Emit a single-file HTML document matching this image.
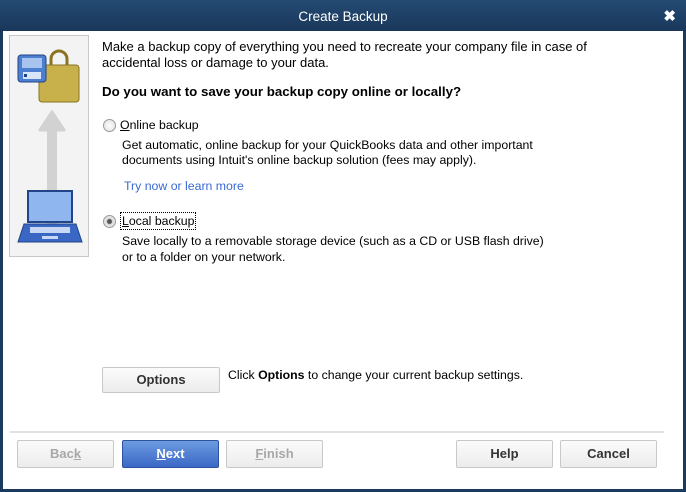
<!DOCTYPE html>
<html><head><style>
*{margin:0;padding:0;box-sizing:border-box}
body{width:686px;height:492px;background:#1c3a5e;font-family:"Liberation Sans",sans-serif;font-size:12.3px;color:#000;position:relative;overflow:hidden}
.title{position:absolute;left:0;top:0;width:686px;height:31px;background:linear-gradient(#244a73,#1a375a);color:#fff;font-size:13.5px;text-align:center;line-height:34px}
.x{position:absolute;right:10px;top:0;font-size:15px;font-weight:bold;line-height:34px}
.main{position:absolute;left:3px;top:31px;width:680px;height:458px;background:#fff}
.left{position:absolute;left:6px;top:4px;width:80px;height:222px;background:#f3f3f3;border:1px solid #c8c8c8}
.t{position:absolute;white-space:nowrap;line-height:16px}
.radio{position:absolute;width:13px;height:13px;border-radius:50%;border:1px solid #999;background:radial-gradient(#fff,#ddd)}
.btn{position:absolute;top:409px;height:28px;border:1px solid #c8c8c8;border-radius:2px;background:linear-gradient(#fbfbfb,#ececec);text-align:center;line-height:26px;font-size:13px;font-family:"Liberation Sans Narrow","Liberation Sans",sans-serif;font-weight:bold;color:#333}
.dis{color:#a8a8a8}
u{text-decoration:underline}
</style></head><body>
<div class="title">Create Backup<span class="x">✖</span></div>
<div class="main">
<div class="left">
<svg width="80" height="222" viewBox="0 0 80 222">
<rect x="37" y="82" width="10" height="106" fill="#d2d2d2"/>
<path d="M30 94 L42 76 L54 94 Z" fill="#d2d2d2" stroke="#d2d2d2" stroke-width="3" stroke-linejoin="round"/>
<rect x="29" y="29" width="40" height="37" rx="3" fill="#c8b04a" stroke="#8a7420"/>
<path d="M41 29 v-6 a8 8 0 0 1 16 0 v6" fill="none" stroke="#8a7420" stroke-width="3"/>
<rect x="8" y="19" width="28" height="27" rx="3" fill="#4d7fd0" stroke="#22458a"/>
<rect x="12" y="22" width="20" height="10" fill="#a8c4ee"/>
<rect x="13" y="36" width="18" height="7" fill="#d8e6fa"/>
<rect x="14" y="38" width="3" height="3" fill="#22458a"/>
<rect x="18" y="155" width="44" height="31" fill="#8fb6ee" stroke="#22458a" stroke-width="2"/>
<polygon points="14,188 66,188 72,206 8,206" fill="#3a66c4" stroke="#22458a"/>
<rect x="20" y="191" width="40" height="6" fill="#c8d8f4"/>
<rect x="32" y="200" width="16" height="3" fill="#c8d8f4"/>
</svg>
</div>
<div class="t" style="left:99px;top:8px;font-size:13px">Make a backup copy of everything you need to recreate your company file in case of</div>
<div class="t" style="left:99px;top:24px;font-size:13px">accidental loss or damage to your data.</div>
<div class="t" style="left:99px;top:53px;font-weight:bold;font-size:13.3px">Do you want to save your backup copy online or locally?</div>
<div class="radio" style="left:100px;top:88px"></div>
<div class="t" style="left:117px;top:86px"><u>O</u>nline backup</div>
<div class="t" style="left:119px;top:106px">Get automatic, online backup for your QuickBooks data and other important</div>
<div class="t" style="left:119px;top:121px">documents using Intuit's online backup solution (fees may apply).</div>
<div class="t" style="left:121px;top:147px;color:#3a6ad0">Try now or learn more</div>
<div class="radio" style="left:100px;top:184px;background:radial-gradient(#555 0 2px,#ddd 3px,#eee)"></div>
<div class="t" style="left:117px;top:181px;border:1px dotted #000;padding:0 1px"><u>L</u>ocal backup</div>
<div class="t" style="left:119px;top:202px">Save locally to a removable storage device (such as a CD or USB flash drive)</div>
<div class="t" style="left:119px;top:218px">or to a folder on your network.</div>
<div class="btn" style="left:99px;top:336px;width:118px;height:26px;line-height:24px">Options</div>
<div class="t" style="left:225px;top:336px">Click <b>Options</b> to change your current backup settings.</div>
<div style="position:absolute;left:7px;top:400px;width:654px;height:2px;background:#e2e2e2"></div>
<div class="btn dis" style="left:14px;width:97px">Bac<u>k</u></div>
<div class="btn" style="left:119px;width:97px;background:linear-gradient(#6c9be0,#3b68c6);border-color:#2d52a0;color:#fff"><u>N</u>ext</div>
<div class="btn dis" style="left:223px;width:97px"><u>F</u>inish</div>
<div class="btn" style="left:453px;width:97px">Help</div>
<div class="btn" style="left:557px;width:97px">Cancel</div>
</div>
</body></html>
